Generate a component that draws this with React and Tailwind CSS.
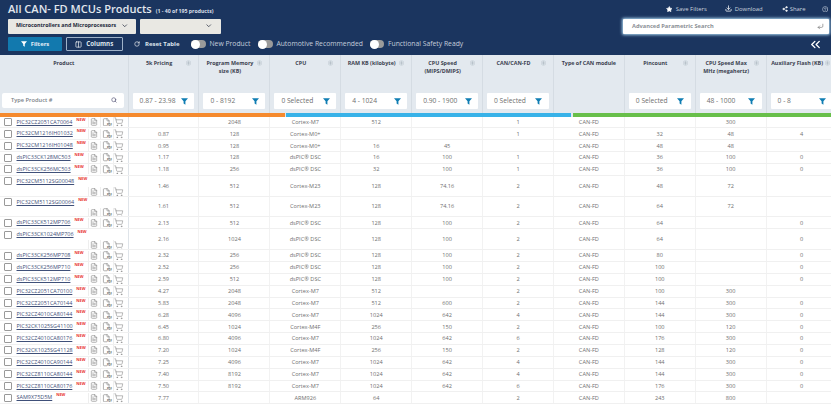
import React from "react";
import { ChevronDown, Search, RotateCw, Star, Download, Share2, CircleHelp, CornerDownLeft, ChevronsLeft, Columns2, ShoppingCart, FileText, File } from "lucide-react";

const D = "dsPIC® DSC", M7 = "Cortex-M7", M4 = "Cortex-M4F", M0 = "Cortex-M0+", M23 = "Cortex-M23";
const rows = [
  ["PIC32CZ2051CA70064", "", "2048", M7, "512", "", "1", "", "300", ""],
  ["PIC32CM1216IH01032", "0.87", "128", M0, "", "", "1", "32", "48", "4"],
  ["PIC32CM1216IH01048", "0.95", "128", M0, "16", "45", "", "48", "48", ""],
  ["dsPIC33CK128MC503", "1.17", "128", D, "16", "100", "1", "36", "100", "0"],
  ["dsPIC33CK256MC503", "1.18", "256", D, "32", "100", "1", "36", "100", "0"],
  ["PIC32CM5112SG00048", "1.46", "512", M23, "128", "74.16", "2", "48", "72", "", true],
  ["PIC32CM5112SG00064", "1.61", "512", M23, "128", "74.16", "2", "64", "72", "", true],
  ["dsPIC33CK512MP706", "2.13", "512", D, "128", "100", "2", "64", "", "0"],
  ["dsPIC33CK1024MP706", "2.16", "1024", D, "128", "100", "2", "64", "", "0", true],
  ["dsPIC33CK256MP708", "2.32", "256", D, "128", "100", "2", "80", "", "0"],
  ["dsPIC33CK256MP710", "2.52", "256", D, "128", "100", "2", "100", "", "0"],
  ["dsPIC33CK512MP710", "2.59", "512", D, "128", "100", "2", "100", "", "0"],
  ["PIC32CZ2051CA70100", "4.27", "2048", M7, "512", "", "2", "100", "300", ""],
  ["PIC32CZ2051CA70144", "5.83", "2048", M7, "512", "600", "2", "144", "300", "0"],
  ["PIC32CZ4010CA80144", "6.28", "4096", M7, "1024", "642", "4", "144", "300", "0"],
  ["PIC32CK1025SG41100", "6.45", "1024", M4, "256", "150", "2", "100", "120", "0"],
  ["PIC32CZ4010CA80176", "6.80", "4096", M7, "1024", "642", "6", "176", "300", "0"],
  ["PIC32CK1025SG41128", "7.20", "1024", M4, "256", "150", "2", "128", "120", "0"],
  ["PIC32CZ4010CA90144", "7.25", "4096", M7, "1024", "642", "4", "144", "300", "0"],
  ["PIC32CZ8110CA80144", "7.40", "8192", M7, "1024", "642", "4", "144", "300", "0"],
  ["PIC32CZ8110CA80176", "7.50", "8192", M7, "1024", "642", "6", "176", "300", "0"],
  ["SAM9X75D5M", "7.77", "", "ARM926", "64", "", "2", "243", "800", ""],
];

const heads = [
  ["5k Pricing", "", "0.87 - 23.98", true],
  ["Program Memory", "size (KB)", "0 - 8192", true],
  ["CPU", "", "0 Selected", true],
  ["RAM KB (kilobyte)", "", "4 - 1024", true],
  ["CPU Speed", "(MIPS/DMIPS)", "0.90 - 1900", true],
  ["CAN/CAN-FD", "", "0 Selected", true],
  ["Type of CAN module", "", null, false],
  ["Pincount", "", "0 Selected", true],
  ["CPU Speed Max", "MHz (megahertz)", "48 - 1000", true],
  ["Auxiliary Flash (KB)", "", "0 - 8", true],
];

const gridCols = "grid grid-cols-[128.6px_repeat(10,70.9px)]";

function Funnel() {
  return (
    <svg viewBox="0 0 10 10" className="w-[7px] h-[7px] shrink-0">
      <path d="M0 0.5H10L6.3 4.8V9.5L3.7 8V4.8Z" fill="#0f7db3" />
    </svg>
  );
}

function SortMark() {
  return (
    <svg viewBox="0 0 10 12" className="w-[5px] h-[6px] shrink-0 mt-[1px] mr-[3px] ml-[1px]">
      <circle cx="5" cy="6" r="4.6" fill="none" stroke="#b8c2cb" strokeWidth="1" />
      <path d="M5 2.4 7.6 5.4H2.4ZM5 9.6 2.4 6.6H7.6Z" fill="#aab5bf" />
    </svg>
  );
}

function Toggle() {
  return (
    <span className="w-[14.5px] h-[8px] rounded-full bg-[#9a9a9a] flex items-center">
      <span className="w-[9px] h-[9px] rounded-full bg-white" />
    </span>
  );
}

function ToggleLabel({ children, className }) {
  return (
    <span className={`flex items-center gap-[3.5px] text-[6.8px] text-[#c3cddb] whitespace-nowrap ${className}`}>
      <Toggle />
      {children}
    </span>
  );
}

function PdfIcon() {
  return (
    <span className="relative w-[8.5px] h-[8.5px] flex">
      <File size={8.5} strokeWidth={1.6} color="#777" />
      <span className="absolute right-[-1px] bottom-[0px] text-[2.5px] leading-none font-bold text-[#666] bg-white">PDF</span>
    </span>
  );
}

function RowIcons() {
  return (
    <span className="flex items-center h-[10px] shrink-0">
      <span className="w-[12px] h-full border-l border-[#eeeeee] flex items-center justify-center">
        <FileText size={8} strokeWidth={1.6} color="#777" />
      </span>
      <span className="w-[13px] h-full border-l border-[#eeeeee] flex items-center justify-center">
        <PdfIcon />
      </span>
      <span className="w-[12px] h-full border-l border-[#eeeeee] flex items-center justify-center">
        <ShoppingCart size={9.5} strokeWidth={1.3} color="#777" />
      </span>
    </span>
  );
}

function ProductCell({ name, tall }) {
  const label = (
    <span className="flex items-start min-w-0">
      <span className="w-[8px] h-[8px] border border-[#999] rounded-[1px] bg-white shrink-0 ml-[4px] mt-[1.5px]" />
      <a className="ml-[4.5px] text-[5.45px] leading-[11px] text-[#3f5079] underline whitespace-nowrap">{name}</a>
      <span className="ml-[4px] text-[3.9px] leading-[6px] font-bold text-[#e8302c]">NEW</span>
    </span>
  );
  if (tall) {
    return (
      <div className="flex flex-col h-full border-r border-[#dfe4e9] overflow-hidden">
        {label}
        <div className="flex justify-end pr-[3px] mt-auto">
          <RowIcons />
        </div>
      </div>
    );
  }
  return (
    <div className="flex items-center justify-between h-full border-r border-[#dfe4e9] pr-[3px] overflow-hidden">
      {label}
      <RowIcons />
    </div>
  );
}

function Row({ r }) {
  const tall = r[10] === true;
  const vals = [r[1], r[2], r[3], r[4], r[5], r[6], "CAN-FD", r[7], r[8], r[9]];
  return (
    <div className={`${gridCols} ${tall ? "h-[20.8px]" : "h-[11.86px]"} border-b border-[#f0f0f0]`}>
      <ProductCell name={r[0]} tall={tall} />
      {vals.map((v, i) => (
        <div key={i} className="flex items-center justify-center h-full border-r border-[#f2f2f2] text-[5.6px] text-[#707070] whitespace-nowrap">
          {v}
        </div>
      ))}
    </div>
  );
}

function HeadCell({ h }) {
  return (
    <div className="h-full border-r border-[#d5dce3] flex flex-col pt-[4.5px] px-[4px] pb-[4px]">
      <div className="flex items-start h-[22px]">
        <span className="flex-1 text-[5.4px] leading-[8px] font-bold text-[#3b4250] text-center whitespace-nowrap">
          {h[0]}
          {h[1] && <br />}
          {h[1]}
        </span>
        {h[3] && <SortMark />}
      </div>
      {h[2] && (
        <div className="mt-auto h-[16px] bg-white rounded-[1px] flex items-center justify-between pl-[7px] pr-[6.5px]">
          <span className="text-[6.7px] text-[#6f6f6f] whitespace-nowrap">{h[2]}</span>
          <Funnel />
        </div>
      )}
    </div>
  );
}

export default function App() {
  return (
    <div className="w-[831px] h-[406px] overflow-hidden bg-white font-['Open_Sans',sans-serif]">
      <header className="h-[54.5px] bg-[#1b355f] flex flex-col">
        <div className="flex items-center justify-between h-[18px] pl-[8px] pr-[3px]">
          <div className="flex items-baseline gap-[4px]">
            <span className="text-[11.05px] font-semibold text-[#e2e7ee] whitespace-nowrap">All CAN- FD MCUs Products</span>
            <span className="text-[5.2px] font-bold text-[#d9dfe8]">(1 - 40 of 195 products)</span>
          </div>
          <div className="flex items-center text-[5.9px] text-[#c9d2de]">
            <Star size={6.5} fill="#fff" color="#fff" className="mr-[3.5px]" />
            <span>Save Filters</span>
            <Download size={7} color="#fff" strokeWidth={2.5} className="ml-[18px] mr-[3px]" />
            <span>Download</span>
            <Share2 size={6} color="#fff" fill="#fff" className="ml-[19px] mr-[2px]" />
            <span>Share</span>
            <CircleHelp size={6.5} color="#d5dce6" className="ml-[16px]" />
          </div>
        </div>
        <div className="flex items-center justify-between h-[16px] pl-[8px] pr-[2px]">
          <div className="flex gap-[3.5px]">
            <div className="w-[128px] h-[15px] bg-[#e9e8e3] rounded-[1px] flex items-center pl-[8px] gap-[5px]">
              <span className="text-[5.3px] font-bold text-[#23293a] whitespace-nowrap">Microcontrollers and Microprocessors</span>
              <ChevronDown size={7.5} color="#2c3344" strokeWidth={2.4} />
            </div>
            <div className="w-[81px] h-[15px] bg-[#e9e8e3] rounded-[1px] flex items-center justify-end pr-[8.5px]">
              <ChevronDown size={7.5} color="#2c3344" strokeWidth={2.4} />
            </div>
          </div>
          <div className="w-[206px] h-[15px] bg-white rounded-[1px] shadow-[0_0_3px_1px_#a9d4ef] flex items-center justify-between pl-[9px] pr-[5px]">
            <span className="text-[5.7px] font-bold text-[#8b8f96]">Advanced Parametric Search</span>
            <CornerDownLeft size={7} color="#666" />
          </div>
        </div>
        <div className="flex items-center h-[15px] mt-[2.5px] pl-[8px]">
          <button className="w-[54px] h-[14px] bg-[#1279ae] rounded-[1px] flex items-center justify-center gap-[4px] text-[5.9px] font-bold text-[#e2eef6]">
            <svg viewBox="0 0 10 10" className="w-[6px] h-[6px]">
              <path d="M0 0.5H10L6.3 4.8V9.5L3.7 8V4.8Z" fill="#fff" />
            </svg>
            Filters
          </button>
          <button className="ml-[3.5px] w-[57px] h-[14px] border border-[#9fb2c9] rounded-[1px] flex items-center justify-center gap-[4.5px] text-[6.2px] font-bold text-[#dfe6ee]">
            <Columns2 size={7} color="#fff" strokeWidth={2.2} />
            Columns
          </button>
          <span className="ml-[11.5px] flex items-center gap-[5px] text-[6px] font-bold text-[#dfe6ee] whitespace-nowrap">
            <RotateCw size={6} color="#fff" strokeWidth={2.4} />
            Reset Table
          </span>
          <ToggleLabel className="ml-[12px]">New Product</ToggleLabel>
          <ToggleLabel className="ml-[8px]">Automotive Recommended</ToggleLabel>
          <ToggleLabel className="ml-[7px]">Functional Safety Ready</ToggleLabel>
          <ChevronsLeft size={15} color="#fff" strokeWidth={2.2} className="ml-auto mr-[8px]" />
        </div>
      </header>

      <div className={`${gridCols} h-[58.8px] bg-[#e3e9ef]`}>
        <div className="h-full border-r border-[#d5dce3] flex flex-col pt-[4.5px] px-[2px] pb-[5.5px]">
          <div className="text-[5.4px] leading-[8px] font-bold text-[#3b4250] text-center">Product</div>
          <div className="mt-auto h-[15px] bg-white rounded-[2px] flex items-center justify-between pl-[9px] pr-[7px] mr-[2px]">
            <span className="text-[5.7px] font-semibold text-[#7a7f87]">Type Product #</span>
            <Search size={6} color="#557" strokeWidth={2.6} />
          </div>
        </div>
        {heads.map((h, i) => (
          <HeadCell key={i} h={h} />
        ))}
      </div>

      <div className="flex h-[3.3px] gap-[1.5px] bg-[#e3e9ef]">
        <div className="w-[284.5px] bg-[#f58a2e]" />
        <div className="w-[285px] bg-[#38b2e8]" />
        <div className="flex-1 bg-[#68bf4a]" />
      </div>

      <div>
        {rows.map((r) => (
          <Row key={r[0]} r={r} />
        ))}
      </div>
    </div>
  );
}
